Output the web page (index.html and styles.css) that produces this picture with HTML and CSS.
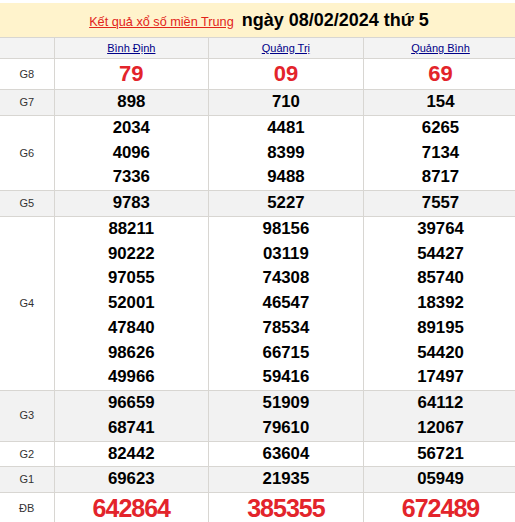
FILE: index.html
```html
<!DOCTYPE html>
<html lang="vi">
<head>
<meta charset="utf-8">
<title>Kết quả xổ số miền Trung</title>
<link rel="stylesheet" href="styles.css">
</head>
<body>
<div class="wrap">
  <div class="title">
    <a class="title-link" href="#">Kết quả xổ số miền Trung</a>
    <span class="title-date">ngày 08/02/2024 thứ 5</span>
  </div>
  <table class="kq">
    <colgroup>
      <col class="c-label">
      <col class="c-prov">
      <col class="c-prov">
      <col class="c-prov">
    </colgroup>
    <tr class="head">
      <td></td>
      <td><a href="#">Bình Định</a></td>
      <td><a href="#">Quảng Trị</a></td>
      <td><a href="#">Quảng Bình</a></td>
    </tr>
    <tr class="g8">
      <td class="lbl">G8</td>
      <td class="big">79</td>
      <td class="big">09</td>
      <td class="big">69</td>
    </tr>
    <tr class="alt">
      <td class="lbl">G7</td>
      <td><div>898</div></td>
      <td><div>710</div></td>
      <td><div>154</div></td>
    </tr>
    <tr>
      <td class="lbl">G6</td>
      <td><div>2034</div><div>4096</div><div>7336</div></td>
      <td><div>4481</div><div>8399</div><div>9488</div></td>
      <td><div>6265</div><div>7134</div><div>8717</div></td>
    </tr>
    <tr class="alt">
      <td class="lbl">G5</td>
      <td><div>9783</div></td>
      <td><div>5227</div></td>
      <td><div>7557</div></td>
    </tr>
    <tr>
      <td class="lbl">G4</td>
      <td><div>88211</div><div>90222</div><div>97055</div><div>52001</div><div>47840</div><div>98626</div><div>49966</div></td>
      <td><div>98156</div><div>03119</div><div>74308</div><div>46547</div><div>78534</div><div>66715</div><div>59416</div></td>
      <td><div>39764</div><div>54427</div><div>85740</div><div>18392</div><div>89195</div><div>54420</div><div>17497</div></td>
    </tr>
    <tr class="alt">
      <td class="lbl">G3</td>
      <td><div>96659</div><div>68741</div></td>
      <td><div>51909</div><div>79610</div></td>
      <td><div>64112</div><div>12067</div></td>
    </tr>
    <tr>
      <td class="lbl">G2</td>
      <td><div>82442</div></td>
      <td><div>63604</div></td>
      <td><div>56721</div></td>
    </tr>
    <tr class="alt">
      <td class="lbl">G1</td>
      <td><div>69623</div></td>
      <td><div>21935</div></td>
      <td><div>05949</div></td>
    </tr>
    <tr class="db">
      <td class="lbl">ĐB</td>
      <td class="huge">642864</td>
      <td class="huge">385355</td>
      <td class="huge">672489</td>
    </tr>
  </table>
</div>
</body>
</html>
```

FILE: styles.css
```css
html {
  overflow: hidden;
}
body {
  margin: 0;
  background: #ffffff;
  font-family: "Liberation Sans", Arial, sans-serif;
}
.wrap {
  padding-top: 3px;
  width: 518px;
}
.title {
  background: #fff3cc;
  height: 34px;
  display: flex;
  align-items: center;
  justify-content: center;
  gap: 8px;
}
.title-link {
  color: #e2231a;
  font-size: 12.7px;
  text-decoration: underline;
  margin-top: 3px;
}
.title-date {
  color: #000;
  font-size: 18px;
  font-weight: bold;
}
.kq {
  width: 518px;
  border-collapse: collapse;
  table-layout: fixed;
}
.c-label {
  width: 54px;
}
.c-prov {
  width: 154.6px;
}
.kq td {
  border: 1px solid #d8d6d2;
  padding: 0;
  text-align: center;
  vertical-align: middle;
  font-weight: bold;
  font-size: 16.8px;
  color: #000;
  line-height: 24.75px;
}
.kq tr td:first-child {
  border-left: none;
}
.kq tr.head td {
  background: #f3f3f3;
  height: 20px;
  line-height: 20px;
  font-weight: normal;
  font-size: 11px;
}
.kq tr.head a {
  color: #000088;
  text-decoration: underline;
}
.kq tr.alt td {
  background: #f2f2f2;
}
.kq td.lbl {
  font-weight: normal;
  font-size: 11px;
  color: #333;
}
.kq tr.g8 td {
  height: 30px;
}
.kq td.big {
  color: #e3242b;
  font-size: 22px;
  line-height: 30px;
}
.kq tr.db td {
  height: 30px;
}
.kq td.huge {
  color: #e3242b;
  font-size: 25px;
  letter-spacing: -1px;
  line-height: 30px;
}
```
